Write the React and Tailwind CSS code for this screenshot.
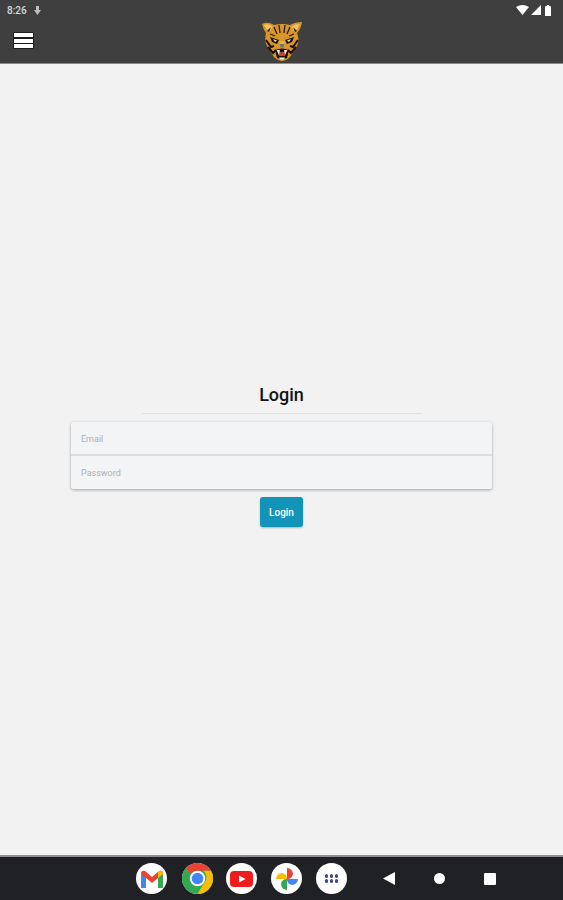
import React from 'react';

const Tiger = () => (
  <svg width="42" height="42" viewBox="0 0 42 42">
    <path d="M1 4 Q7 1 13 5 Q21 3 29 5 Q34 2 41 2 Q40 9 36 13 Q39 20 36 26 L31 34 Q28 40 21 41 Q14 40 11 34 L6 26 Q3 20 5 13 Q2 9 1 4 Z" fill="#d8952a" />
    <path d="M3 5 Q8 3 12 7 L8 12 Q5 9 3 5 Z M39 4 Q34 4 30 7 L34 12 Q37 9 39 4 Z" fill="#f0c468" />
    <path d="M10 7 L8 12 L6 11 Z M32 7 L34 12 L36 11 Z" fill="#2a1a0c" />
    <path d="M13 7 L16 14 M18 5 L19 13 M24 5 L23 13 M29 7 L26 14 M9 14 L14 16 M33 14 L28 16" stroke="#2b1a0c" strokeWidth="1.3" fill="none" />
    <path d="M9 17 L18 20 L16 24 L11 22 Z M33 17 L24 20 L26 24 L31 22 Z" fill="#21130a" />
    <path d="M12 19 L16 20.5 L14 22 Z M30 19 L26 20.5 L28 22 Z" fill="#e9e4cc" />
    <path d="M18 21 L24 21 L23 27 L19 27 Z" fill="#e2b050" />
    <path d="M18.5 24 L23.5 24 L22.5 27.5 L19.5 27.5 Z" fill="#7b7367" />
    <path d="M5 20 L10 27 L13 26 M7 27 L12 33 L15 30 M37 20 L32 27 L29 26 M35 27 L30 33 L27 30" stroke="#17100a" strokeWidth="2" fill="none" />
    <path d="M14 30 Q21 27 28 30 L26 38 Q21 40 16 38 Z" fill="#1e0c08" />
    <path d="M17 32 L25 32 L24 36 L18 36 Z" fill="#b5482f" />
    <path d="M15.5 30 L18 35 L19 30 Z M26.5 30 L24 35 L23 30 Z M18 37.5 L24 37.5 L23 39.5 L19 39.5 Z" fill="#f2ead6" />
  </svg>
);

const Gmail = () => (
  <svg width="24" height="18" viewBox="0 0 24 18">
    <path d="M1 4 L1 18 L6 18 L6 7 Z" fill="#4285f4" />
    <path d="M23 4 L23 18 L18 18 L18 7 Z" fill="#34a853" />
    <path d="M1 4 Q1 0 5 1 L12 7 L19 1 Q23 0 23 4 L18 8 L12 13 L6 8 Z" fill="#ea4335" />
    <path d="M19 1 Q23 0 23 4 L18 8 L18 2 Z" fill="#fbbc04" />
  </svg>
);

const Chrome = () => (
  <svg width="31" height="31" viewBox="0 0 32 32">
    <circle cx="16" cy="16" r="16" fill="#34a853" />
    <path d="M16 0 A16 16 0 0 1 30 8 L16 8 A8 8 0 0 0 9 12 L4 5 A16 16 0 0 1 16 0 Z" fill="#ea4335" />
    <path d="M4 5 L9 12 L16 24 L10 31 A16 16 0 0 1 2 8 Z" fill="#34a853" />
    <path d="M30 8 A16 16 0 0 1 16 32 L23 20 A8 8 0 0 0 22 8 Z" fill="#fbbc04" />
    <circle cx="16" cy="16" r="8" fill="#fff" />
    <circle cx="16" cy="16" r="6" fill="#4285f4" />
  </svg>
);

const Youtube = () => (
  <svg width="23" height="16" viewBox="0 0 23 16">
    <rect width="23" height="16" rx="4" fill="#f01c1c" />
    <path d="M9 4.5 L15.5 8 L9 11.5 Z" fill="#fff" />
  </svg>
);

const Photos = () => (
  <svg width="24" height="24" viewBox="0 0 24 24">
    <path d="M12 12 L12 1 A6 6 0 0 1 18 7 A6 6 0 0 1 12 12 Z" fill="#ea4335" />
    <path d="M12 12 L23 12 A6 6 0 0 1 17 18 A6 6 0 0 1 12 12 Z" fill="#4285f4" />
    <path d="M12 12 L12 23 A6 6 0 0 1 6 17 A6 6 0 0 1 12 12 Z" fill="#34a853" />
    <path d="M12 12 L1 12 A6 6 0 0 1 7 6 A6 6 0 0 1 12 12 Z" fill="#fbbc04" />
  </svg>
);

const Dots = () => (
  <div className="grid grid-cols-3 gap-[1.5px]">
    {[0, 1, 2, 3, 4, 5].map((n) => (
      <span key={n} className="size-[3.5px] rounded-full bg-[#3c4a8c]" />
    ))}
  </div>
);

const Dock = ({ children }) => (
  <div className="flex size-[31px] items-center justify-center overflow-hidden rounded-full bg-white">
    {children}
  </div>
);

const Field = ({ placeholder, last }) => (
  <div className={`flex h-[33.5px] items-center bg-[#f3f4f6] px-[10px] ${last ? 'pt-[3px]' : 'border-b-2 border-[#dcdcdc] pt-[3px]'}`}>
    <span className="text-[9px] text-[#b0b0b0]">{placeholder}</span>
  </div>
);

export default function App() {
  return (
    <div className="flex h-[900px] flex-col bg-[#f2f2f2] font-['Roboto',sans-serif]">
      <header className="h-[64px] border-b border-[#8a8a8a] bg-[#3f3f3f]">
        <div className="flex h-[20px] items-center justify-between pl-[7px] pr-[12px]">
          <div className="flex items-center gap-[7px]">
            <span className="text-[10px] font-medium text-[#d8d8d8]">8:26</span>
            <svg width="7" height="9" viewBox="0 0 7 9">
              <path d="M2 0 H5 V4 H7 L3.5 9 L0 4 H2 Z" fill="#bdbdbd" />
            </svg>
          </div>
          <div className="flex items-center gap-[2px]">
            <svg width="13" height="10" viewBox="0 0 13 10">
              <path d="M0 2 Q6.5 -2 13 2 L6.5 10 Z" fill="#fff" />
            </svg>
            <svg width="10" height="10" viewBox="0 0 10 10">
              <path d="M10 0 V10 H0 Z" fill="#fff" />
            </svg>
            <svg width="6" height="11" viewBox="0 0 6 11" className="ml-[2px]">
              <path d="M1.5 1 H2 V0 H4 V1 H4.5 Q6 1 6 2 V11 H0 V2 Q0 1 1.5 1 Z" fill="#fff" />
            </svg>
          </div>
        </div>
        <div className="relative flex h-[43px] items-start justify-center">
          <div className="absolute left-[13px] top-[12px] flex w-[21px] flex-col gap-[1.5px] rounded-[2px] bg-[#1c1c1c] p-[1px]">
            <span className="h-[4px] bg-white" />
            <span className="h-[4px] bg-white" />
            <span className="h-[4px] bg-white" />
          </div>
          <Tiger />
        </div>
      </header>

      <main className="flex flex-1 flex-col items-center pt-[319px]">
        <h1 className="text-[18px] leading-[24px] font-medium text-[#111]">Login</h1>
        <div className="mt-[6px] h-px w-[280px] bg-[#e2e2e2]" />
        <div className="mt-[8px] w-[421px] overflow-hidden rounded-[3px] shadow-[0_1px_3px_rgba(0,0,0,0.35)]">
          <Field placeholder="Email" />
          <Field placeholder="Password" last />
        </div>
        <button className="mt-[8px] h-[30px] w-[43px] rounded-[3px] bg-[#1293b8] text-[10px] font-medium text-white shadow-[0_1px_2px_rgba(0,0,0,0.25)]">
          Login
        </button>
      </main>

      <footer className="flex h-[45px] items-center border-t-2 border-[#8f8f8f] bg-[#202124] pl-[136px]">
        <div className="flex items-center gap-[14px]">
          <Dock><Gmail /></Dock>
          <div className="ml-[1px]"><Dock><Chrome /></Dock></div>
          <div className="-ml-[1px]"><Dock><Youtube /></Dock></div>
          <Dock><Photos /></Dock>
          <Dock><Dots /></Dock>
        </div>
        <div className="ml-[36px] flex items-center gap-[39px]">
          <svg width="12" height="13" viewBox="0 0 12 13">
            <path d="M12 0 V13 L0 6.5 Z" fill="#fff" />
          </svg>
          <span className="size-[11px] rounded-full bg-white" />
          <span className="size-[12px] rounded-[1px] bg-white" />
        </div>
      </footer>
    </div>
  );
}
